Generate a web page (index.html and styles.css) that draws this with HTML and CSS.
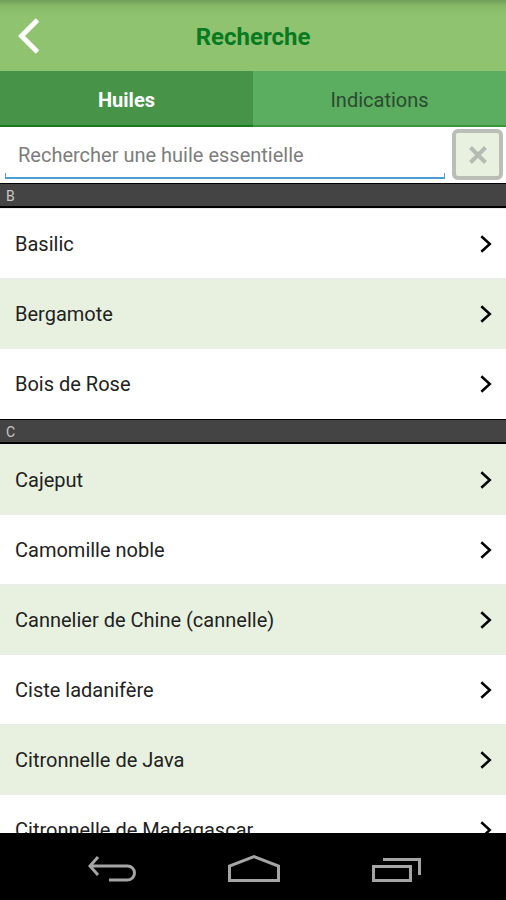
FILE: index.html
```html
<!DOCTYPE html>
<html lang="fr">
<head>
<meta charset="utf-8">
<meta name="viewport" content="width=device-width, initial-scale=1">
<title>Recherche</title>
<link rel="stylesheet" href="styles.css">
</head>
<body>
<svg class="symbols" aria-hidden="true">
  <symbol id="chevron" viewBox="0 0 12 18"><path d="M1.3 1.3 9.8 9l-8.5 7.7" fill="none" stroke="currentColor" stroke-width="2.5"/></symbol>
</svg>
<header class="header">
  <button class="back" type="button" aria-label="Retour">
    <svg width="22" height="36" viewBox="0 0 22 36"><path d="M19.500 2 3.500 18l16 16" fill="none" stroke="#fff" stroke-width="5"/></svg>
  </button>
  <h1 class="title">Recherche</h1>
</header>
<nav class="tabs">
  <button class="tab tab-active" type="button">Huiles</button>
  <button class="tab" type="button">Indications</button>
</nav>
<form class="search">
  <input class="search-input" type="text" aria-label="Rechercher une huile essentielle" placeholder="Rechercher une huile essentielle">
  <button class="clear" type="button" aria-label="Effacer">
    <svg width="18" height="18" viewBox="0 0 18 18"><path d="M1.5 1.5l15 15M16.5 1.5l-15 15" stroke="#b5bab2" stroke-width="4"/></svg>
  </button>
</form>
<main class="list">
  <h2 class="section">B</h2>
  <a class="row" href="#">Basilic<svg class="chevron"><use href="#chevron"/></svg></a>
  <a class="row row-tint" href="#">Bergamote<svg class="chevron"><use href="#chevron"/></svg></a>
  <a class="row" href="#">Bois de Rose<svg class="chevron"><use href="#chevron"/></svg></a>
  <h2 class="section">C</h2>
  <a class="row row-tint" href="#">Cajeput<svg class="chevron"><use href="#chevron"/></svg></a>
  <a class="row" href="#">Camomille noble<svg class="chevron"><use href="#chevron"/></svg></a>
  <a class="row row-tint" href="#">Cannelier de Chine (cannelle)<svg class="chevron"><use href="#chevron"/></svg></a>
  <a class="row" href="#">Ciste ladanifère<svg class="chevron"><use href="#chevron"/></svg></a>
  <a class="row row-tint" href="#">Citronnelle de Java<svg class="chevron"><use href="#chevron"/></svg></a>
  <a class="row" href="#">Citronnelle de Madagascar<svg class="chevron"><use href="#chevron"/></svg></a>
</main>
<footer class="system">
  <button class="key" type="button" aria-label="Précédent">
    <svg width="54" height="30" viewBox="0 0 54 30"><path d="M14 2 6 11l8 9M6.500 11H43.500a6.800 6.800 0 0 1 0 14H25" fill="none" stroke="#a5a5a5" stroke-width="3"/></svg>
  </button>
  <button class="key" type="button" aria-label="Accueil">
    <svg width="54" height="30" viewBox="0 0 54 30"><path d="M3.500 25.500V11L28 1.600 52.500 11v14.500z" fill="none" stroke="#a5a5a5" stroke-width="3"/></svg>
  </button>
  <button class="key" type="button" aria-label="Applications récentes">
    <svg width="54" height="30" viewBox="0 0 54 30"><path d="M5.500 11.500h37v14h-37zM15 4.500h36.500V20" fill="none" stroke="#a5a5a5" stroke-width="3"/></svg>
  </button>
</footer>
</body>
</html>
```

FILE: styles.css
```css
* {
  box-sizing: border-box;
}

body {
  display: flex;
  flex-direction: column;
  height: 100vh;
  margin: 0;
  background: #fff;
  color: #222;
  font-family: Roboto, "Liberation Sans", sans-serif;
  font-size: 20px;
}

button {
  padding: 0;
  border: 0;
  background: none;
  color: inherit;
  font: inherit;
}

svg {
  display: block;
}

.symbols {
  position: absolute;
  width: 0;
  height: 0;
}

.header {
  display: grid;
  grid-template-columns: 40px 1fr 40px;
  align-items: center;
  flex: none;
  height: 71px;
  background: linear-gradient(#6f9e58, #87b967 6px, #8fc36f 16px);
}

.back {
  justify-self: end;
}

.title {
  margin: 0;
  padding-top: 2px;
  color: #087a22;
  font-size: 24px;
  font-weight: 700;
  line-height: 28px;
  text-align: center;
}

.tabs {
  display: grid;
  grid-template-columns: 1fr 1fr;
  flex: none;
  height: 56px;
}

.tab {
  padding-top: 3px;
  border-bottom: 2px solid #3a963f;
  background: #5bad5f;
  color: #2c4a30;
}

.tab-active {
  border-color: #1a7a1f;
  background: #479449;
  color: #fff;
  font-weight: 700;
}

.search {
  display: flex;
  align-items: flex-start;
  flex: none;
  height: 55px;
  padding: 2px 3px 0 5px;
}

.search-input {
  flex: 1;
  min-width: 0;
  height: 50px;
  margin-right: 7px;
  padding: 4px 12px 0;
  border: solid #4a9fce;
  border-width: 0 1px 2px;
  border-image: linear-gradient(transparent 44px, #4a9fce 44px) 0 1 2;
  outline: none;
  background: none;
  color: #222;
  font: inherit;
}

.search-input::placeholder {
  color: #7d7d7d;
  opacity: 1;
}

.clear {
  display: grid;
  place-items: center;
  width: 51px;
  height: 51px;
  border: 4px solid #b9beb7;
  border-radius: 6px;
  background: #e8f1e0;
}

.list {
  flex: 1;
  min-height: 0;
  overflow: hidden;
}

.section {
  height: 25px;
  margin: 1px 0 0;
  padding-left: 6px;
  border: solid #000;
  border-width: 1px 0 2px;
  background: #444;
  color: #c8c8c8;
  font-size: 14px;
  font-weight: 400;
  line-height: 24px;
}

.row {
  display: flex;
  align-items: center;
  justify-content: space-between;
  height: 70px;
  padding: 1px 14px 0 15px;
  border-top: 1px solid #ececec;
  color: #222;
  text-decoration: none;
}

.row-tint {
  background: #e8f1e0;
}

.chevron {
  width: 12px;
  height: 18px;
  color: #000;
}

.system {
  display: flex;
  align-items: center;
  justify-content: center;
  gap: 88px;
  flex: none;
  height: 67px;
  padding-top: 6px;
  background: #000;
}
```
